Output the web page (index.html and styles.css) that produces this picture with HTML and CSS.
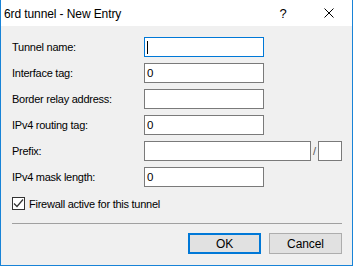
FILE: index.html
```html
<!DOCTYPE html>
<html lang="en">
<head>
    <meta charset="UTF-8">
    <meta name="viewport" content="width=device-width, initial-scale=1.0">
    <title>6rd tunnel - New Entry</title>
    <link rel="stylesheet" href="styles.css">
</head>
<body>
  <div class="window">
    <div class="titlebar">
      <span class="title">6rd tunnel - New Entry</span>
      <span class="caption-btn">?</span>
      <span class="caption-btn">
        <svg width="10" height="10" viewBox="0 0 10 10"><path d="M0.5 0.5 L9.5 9.5 M9.5 0.5 L0.5 9.5" stroke="#000" stroke-width="1" fill="none"/></svg>
      </span>
    </div>

    <div class="content">
      <div class="form">
        <label>Tunnel name:</label>
        <div class="field focused"><span class="caret"></span></div>

        <label>Interface tag:</label>
        <div class="field">0</div>

        <label>Border relay address:</label>
        <div class="field"></div>

        <label>IPv4 routing tag:</label>
        <div class="field">0</div>

        <label>Prefix:</label>
        <div class="prefix-row">
          <div class="field wide"></div>
          <span class="slash">/</span>
          <div class="field tiny"></div>
        </div>

        <label>IPv4 mask length:</label>
        <div class="field">0</div>
      </div>

      <div class="check">
        <span class="box">
          <svg width="11" height="11" viewBox="0 0 11 11"><path d="M1 5.5 L4 8.5 L10 1.5" stroke="#333" stroke-width="1.2" fill="none"/></svg>
        </span>
        <span>Firewall active for this tunnel</span>
      </div>

      <div class="separator"></div>

      <div class="buttons">
        <button type="button" class="btn default">OK</button>
        <button type="button" class="btn">Cancel</button>
      </div>
    </div>
  </div>
</body>
</html>
```

FILE: styles.css
```css
body {
    margin: 0;
    padding: 0;
    font-family: "Liberation Sans", Arial, sans-serif;
    font-size: 11px;
    letter-spacing: -0.25px;
    color: #000;
}
.window {
    width: 353px;
    height: 266px;
    box-sizing: border-box;
    border: 1px solid #1883d7;
    border-top: none;
    background-color: #f0f0f0;
    display: flex;
    flex-direction: column;
}
.titlebar {
    height: 26px;
    background-color: #fff;
    display: flex;
    align-items: center;
    padding-left: 3px;
}
.title {
    flex: 1;
    font-size: 12px;
    letter-spacing: -0.1px;
    padding-top: 1px;
}
.caption-btn {
    width: 46px;
    height: 26px;
    display: flex;
    align-items: center;
    justify-content: center;
    font-size: 13px;
}
.content {
    padding: 11px 10px 0 11px;
    display: flex;
    flex-direction: column;
}
.form {
    display: grid;
    grid-template-columns: 132px auto;
    grid-auto-rows: 20px;
    row-gap: 6px;
    align-items: center;
}
.form label {
    padding-bottom: 1px;
}
.field {
    width: 120px;
    height: 20px;
    box-sizing: border-box;
    border: 1px solid #7a7a7a;
    background-color: #fff;
    padding-left: 2px;
    line-height: 18px;
    font-size: 11.5px;
    position: relative;
}
.field.focused {
    border-color: #0078d7;
}
.caret {
    position: absolute;
    left: 2px;
    top: 3px;
    width: 1px;
    height: 13px;
    background-color: #000;
}
.prefix-row {
    display: flex;
    align-items: center;
}
.field.wide {
    width: 167px;
}
.field.tiny {
    width: 24px;
}
.slash {
    width: 7px;
    text-align: center;
    color: #555;
}
.check {
    display: flex;
    align-items: center;
    gap: 4px;
    margin-top: 10px;
    height: 13px;
}
.box {
    width: 13px;
    height: 13px;
    box-sizing: border-box;
    border: 1px solid #333;
    background-color: #fff;
    display: flex;
    align-items: center;
    justify-content: center;
}
.separator {
    height: 1px;
    background-color: #a0a0a0;
    margin: 13px 0 0 0;
}
.buttons {
    display: flex;
    justify-content: flex-end;
    gap: 8px;
    margin-top: 9px;
}
.btn {
    width: 73px;
    height: 21px;
    box-sizing: border-box;
    border: 1px solid #adadad;
    background-color: #e1e1e1;
    font-family: "Liberation Sans", Arial, sans-serif;
    font-size: 12px;
    letter-spacing: -0.1px;
    color: #000;
    padding: 0;
}
.btn.default {
    border: 2px solid #0078d7;
}
```
